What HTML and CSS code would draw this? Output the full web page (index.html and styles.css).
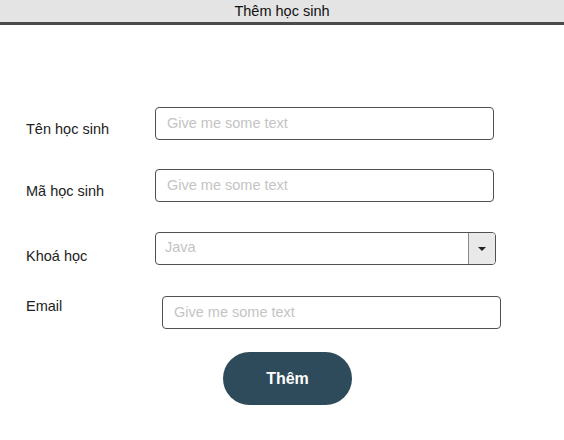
FILE: index.html
```html
<!DOCTYPE html>
<html lang="vi">
<head>
<meta charset="utf-8">
<title>Thêm học sinh</title>
<link rel="stylesheet" href="styles.css">
</head>
<body>
<header class="titlebar">Thêm học sinh</header>
<main class="form">
  <div class="row row-1">
    <label class="label label-1" for="ten">Tên học sinh</label>
    <input class="field" id="ten" type="text" placeholder="Give me some text">
  </div>
  <div class="row row-2">
    <label class="label label-2" for="ma">Mã học sinh</label>
    <input class="field" id="ma" type="text" placeholder="Give me some text">
  </div>
  <div class="row row-3">
    <label class="label label-3">Khoá học</label>
    <div class="select">
      <span class="select-value">Java</span>
      <span class="select-btn"><span class="arrow"></span></span>
    </div>
  </div>
  <div class="row row-4">
    <label class="label label-4" for="email">Email</label>
    <input class="field field-email" id="email" type="text" placeholder="Give me some text">
  </div>
  <div class="row row-5">
    <button class="btn" type="button">Thêm</button>
  </div>
</main>
</body>
</html>
```
FILE: styles.css
```css
* { box-sizing: border-box; }
html, body { margin: 0; padding: 0; background: #fff; }
body {
  font-family: "Liberation Sans", Arial, sans-serif;
  font-size: 14.5px;
  color: #222;
  width: 564px;
  height: 440px;
  overflow: hidden;
}
.titlebar {
  height: 25px;
  background: #e4e4e4;
  border-bottom: 3px solid #4a4a4a;
  text-align: center;
  line-height: 22px;
  color: #111;
  font-size: 14.5px;
}
.form {
  display: flex;
  flex-direction: column;
  padding: 82px 0 0 26px;
}
.row {
  display: flex;
  align-items: flex-start;
}
.row-2 { margin-top: 29px; }
.row-3 { margin-top: 30px; }
.row-4 { margin-top: 31px; }
.row-5 { margin-top: 23px; }
.label {
  width: 129px;
  flex: none;
  line-height: 16px;
  color: #222;
}
.label-1 { margin-top: 14px; }
.label-2 { margin-top: 14px; }
.label-3 { margin-top: 16px; }
.label-4 { margin-top: 2px; }
.field {
  width: 339px;
  height: 33px;
  border: 1px solid #505050;
  border-radius: 4px;
  padding: 0 11px 2px;
  font-family: "Liberation Sans", Arial, sans-serif;
  font-size: 14.5px;
  color: #222;
  outline: none;
  background: #fff;
}
.field::placeholder { color: #c4c4c4; }
.field-email { margin-left: 7px; }
.select {
  width: 341px;
  height: 33px;
  border: 1px solid #505050;
  border-radius: 4px;
  display: flex;
  align-items: stretch;
  overflow: hidden;
}
.select-value {
  flex: 1;
  padding-left: 9px;
  line-height: 29px;
  color: #c4c4c4;
}
.select-btn {
  width: 27px;
  flex: none;
  background: #e9e9e9;
  border-left: 1px solid #8a8a8a;
  display: flex;
  align-items: center;
  justify-content: center;
}
.arrow {
  width: 0;
  height: 0;
  border-left: 4px solid transparent;
  border-right: 4px solid transparent;
  border-top: 4px solid #222;
}
.btn {
  margin-left: 197px;
  width: 129px;
  height: 53px;
  border: none;
  border-radius: 27px;
  background: #2e4b5b;
  color: #fff;
  font-family: "Liberation Sans", Arial, sans-serif;
  font-weight: bold;
  font-size: 16px;
  padding: 0;
}
```
